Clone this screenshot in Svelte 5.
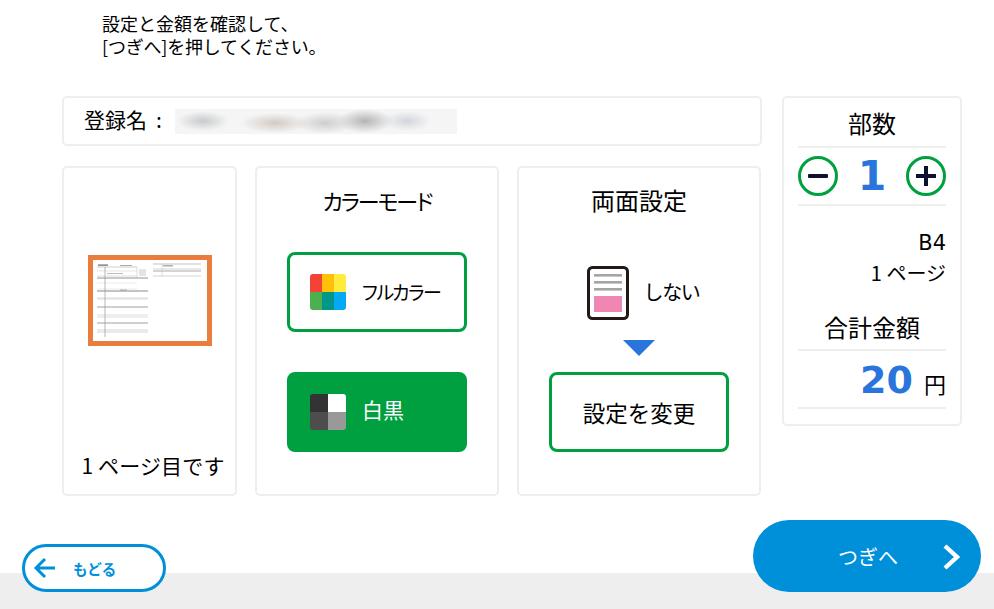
<script lang="ts">
  let copies = $state(1);
  const unitPrice = 20;
  let total = $derived(copies * unitPrice);

  const colorTiles = ['#f44336', '#ffc107', '#ffeb3b', '#4caf50', '#009688', '#03a9f4'];
  // rows of the tiny form preview: [x1, y, x2, stroke, colour]
  const formLines = [
    [4, 7, 44, 0.5, '#999'], [4, 11, 44, 0.4, '#bbb'], [4, 16, 44, 0.4, '#aaa'], [4, 18, 55, 0.8, '#777'],
    [4, 23, 44, 0.4, '#ccc'], [4, 29, 44, 0.4, '#ccc'], [4, 31, 55, 1, '#888'], [4, 38, 55, 0.5, '#bbb'],
    [4, 39, 55, 0.5, '#bbb'], [4, 47, 55, 0.8, '#888'], [4, 55, 55, 0.5, '#bbb'], [4, 57, 55, 0.5, '#bbb'],
    [4, 63, 55, 0.8, '#888'], [4, 70, 55, 0.5, '#aaa'], [4, 72, 55, 0.5, '#aaa'],
    [60, 4, 108, 0.7, '#aaa'], [60, 9, 108, 0.6, '#bbb'], [60, 11, 108, 1, '#aaa'], [60, 16, 108, 0.6, '#bbb']
  ];
</script>

<div class="page">
  <p class="intro">設定と金額を確認して、<br /><span class="tight">[つぎへ]を押してください。</span></p>

  <div class="content">
    <div class="left">
      <div class="card name-box">
        <span class="name-label">登録名<span class="colon">:</span></span>
        <div class="blurred"></div>
      </div>

      <div class="panels">
        <section class="card preview">
          <div class="thumb">
            <svg viewBox="0 0 114 81" width="114" height="81">
              {#each formLines as [x1, y, x2, w, c]}
                <line {x1} y1={y} {x2} y2={y} stroke={c} stroke-width={w} />
              {/each}
              <line x1="12" y1="7" x2="12" y2="77" stroke="#999" stroke-width="0.7" />
              <line x1="44" y1="7" x2="44" y2="18" stroke="#bbb" stroke-width="0.5" />
              <line x1="69" y1="4" x2="69" y2="16" stroke="#bbb" stroke-width="0.5" />
              <rect x="46" y="9" width="7" height="7" fill="#e4e4e4" />
              <rect x="5" y="4.5" width="10" height="1.2" fill="#666" />
              <rect x="27" y="5" width="12" height="0.8" fill="#999" />
              <rect x="70" y="5.4" width="10" height="0.9" fill="#777" />
              <rect x="14" y="13" width="16" height="0.8" fill="#aaa" />
              <rect x="27" y="29.6" width="7" height="0.8" fill="#999" />
            </svg>
          </div>
          <p class="page-no">1 ページ目です</p>
        </section>

        <section class="card mode">
          <h2 class="kana">カラーモード</h2>
          <button class="choice">
            <span class="tiles three">
              {#each colorTiles as c}<i style="background:{c}"></i>{/each}
            </span>
            <span class="choice-text small">フルカラー</span>
          </button>
          <button class="choice on">
            <span class="tiles two">
              <i style="background:#333"></i><i style="background:#fff"></i>
              <i style="background:#4d4d4d"></i><i style="background:#999"></i>
            </span>
            <span class="choice-text">白黒</span>
          </button>
        </section>

        <section class="card duplex">
          <h2>両面設定</h2>
          <div class="duplex-state">
            <svg width="42" height="54" viewBox="0 0 42 54">
              <rect x="1.5" y="1.5" width="39" height="51" rx="4" fill="#fff" stroke="#231815" stroke-width="3" />
              <rect x="7" y="8" width="28" height="2.6" fill="#a5a5a5" />
              <rect x="7" y="15" width="28" height="2.6" fill="#a5a5a5" />
              <rect x="7" y="22" width="28" height="2.6" fill="#a5a5a5" />
              <rect x="7" y="30" width="28" height="16" fill="#ef86b3" />
            </svg>
            <span>しない</span>
          </div>
          <div class="arrow-down"></div>
          <button class="change">設定を変更</button>
        </section>
      </div>
    </div>

    <aside class="card side">
      <h3 class="copies-title">部数</h3>
      <div class="stepper">
        <button class="round" aria-label="減らす" onclick={() => copies > 1 && copies--}>
          <svg width="24" height="24" viewBox="0 0 24 24"><rect x="2" y="10" width="20" height="4" rx="1" fill="#0e1230" /></svg>
        </button>
        <span class="count">{copies}</span>
        <button class="round" aria-label="増やす" onclick={() => copies++}>
          <svg width="24" height="24" viewBox="0 0 24 24"><path d="M2 10h8V2h4v8h8v4h-8v8h-4v-8H2z" fill="#0e1230" /></svg>
        </button>
      </div>
      <div class="specs">
        <div class="size">B4</div>
        <div>1 ページ</div>
      </div>
      <h3 class="total-title">合計金額</h3>
      <div class="total"><b>{total}</b><span>円</span></div>
    </aside>
  </div>

  <footer class="footer">
    <button class="back">
      <svg width="24" height="22" viewBox="0 0 24 22" fill="none" stroke="#0090da" stroke-width="3"><path d="M22 11H3M12 2l-9 9 9 9" /></svg>
      <span>もどる</span>
    </button>
    <button class="next">
      <span>つぎへ</span>
      <svg class="chev" width="18" height="26" viewBox="0 0 18 26" fill="none" stroke="#fff" stroke-width="4.4"><path d="M2 2l12 11L2 24" /></svg>
    </button>
  </footer>
</div>

<style>
  :global(body) {
    margin: 0;
    background: #fff;
    font-family: "Noto Sans CJK JP", "Liberation Sans", sans-serif;
    color: #000;
  }
  button {
    font: inherit;
    cursor: pointer;
    padding: 0;
    background: none;
    color: inherit;
  }
  h2, h3, p { margin: 0; font-weight: 400; }

  .page {
    width: 994px;
    height: 609px;
    position: relative;
    overflow: hidden;
    display: flex;
    flex-direction: column;
  }
  .intro {
    height: 96px;
    box-sizing: border-box;
    padding: 12px 0 0 102px;
    font-size: 18px;
    line-height: 23px;
  }
  .tight { letter-spacing: -0.2px; }
  .content {
    display: flex;
    gap: 20px;
    padding-left: 62px;
    align-items: flex-start;
  }
  .card {
    box-sizing: border-box;
    border: 2px solid #eee;
    border-radius: 5px;
    background: #fff;
  }
  .left { width: 700px; }

  .name-box {
    height: 50px;
    display: flex;
    align-items: center;
    padding-left: 20px;
    font-size: 21px;
    margin-bottom: 20px;
  }
  .name-label { width: 91px; flex: none; margin-bottom: 4px; }
  .colon { margin-left: 9px; }
  .blurred {
    width: 282px;
    height: 25px;
    background:
      radial-gradient(ellipse 26px 10px at 28px 12px, #c8cacc, transparent),
      radial-gradient(ellipse 34px 10px at 100px 14px, #d2cac4, transparent),
      radial-gradient(ellipse 30px 11px at 150px 14px, #cdcdcd, transparent),
      radial-gradient(ellipse 28px 12px at 190px 12px, #b4b4b6, transparent),
      radial-gradient(ellipse 24px 10px at 232px 12px, #d2d6dc, transparent),
      linear-gradient(#f5f5f5, #f5f5f5);
  }

  .panels { display: flex; gap: 18px; }
  .panels section { height: 330px; }

  .preview {
    width: 175px;
    position: relative;
    display: flex;
    flex-direction: column;
    align-items: center;
  }
  .thumb {
    margin-top: 87px;
    width: 124px;
    height: 91px;
    box-sizing: border-box;
    border: 5px solid #e87d3e;
    background: #fff;
    line-height: 0;
  }
  .page-no {
    margin-top: auto;
    margin-bottom: 14px;
    padding-left: 7px;
    font-size: 21px;
    line-height: 30px;
    letter-spacing: 0.15px;
  }

  .mode, .duplex {
    width: 244px;
    display: flex;
    flex-direction: column;
    align-items: center;
  }
  .mode h2, .duplex h2 {
    font-size: 24px;
    line-height: 30px;
    margin-top: 17px;
  }
  .mode h2.kana {
    font-size: 22px;
    font-feature-settings: "palt";
    letter-spacing: -2px;
    margin-bottom: 37px;
  }

  .choice {
    box-sizing: border-box;
    width: 180px;
    height: 80px;
    border: 3px solid #00a040;
    border-radius: 8px;
    background: #fff;
    display: flex;
    align-items: center;
    padding-left: 20px;
    margin-bottom: 40px;
  }
  .choice.on {
    background: #00a040;
    color: #fff;
  }
  .choice-text {
    margin-left: 16px;
    margin-bottom: 5px;
    font-size: 21px;
    line-height: 1;
  }
  .choice-text.small {
    font-size: 19px;
    font-feature-settings: "palt";
    letter-spacing: -1.5px;
    margin-bottom: 2px;
  }

  .tiles {
    display: grid;
    width: 36px;
    height: 36px;
    border-radius: 3px;
    overflow: hidden;
    flex: none;
  }
  .tiles.three { grid-template-columns: repeat(3, 1fr); grid-template-rows: 1fr 1fr; }
  .tiles.two { grid-template-columns: 1fr 1fr; grid-template-rows: 1fr 1fr; }

  .duplex-state {
    display: flex;
    align-items: center;
    gap: 14px;
    margin-top: 51px;
    font-size: 20px;
    letter-spacing: -1.3px;
    padding-left: 9px;
  }
  .duplex-state span { margin-bottom: 3px; }
  .duplex-state svg { display: block; }
  .arrow-down {
    width: 0;
    height: 0;
    margin-top: 20px;
    border-left: 16px solid transparent;
    border-right: 16px solid transparent;
    border-top: 16px solid #2a75dc;
  }
  .change {
    box-sizing: border-box;
    width: 180px;
    height: 80px;
    margin-top: 16px;
    border: 3px solid #00a040;
    border-radius: 8px;
    background: #fff;
    font-size: 22.5px;
  }

  .side {
    width: 180px;
    height: 330px;
    padding: 0 14px;
  }
  .copies-title {
    height: 50px;
    box-sizing: border-box;
    border-bottom: 2px solid #eee;
    text-align: center;
    font-size: 24px;
    line-height: 50px;
  }
  .stepper {
    height: 58px;
    box-sizing: border-box;
    border-bottom: 2px solid #eee;
    display: flex;
    align-items: center;
    justify-content: space-between;
  }
  .round {
    box-sizing: border-box;
    width: 40px;
    height: 40px;
    border: 3px solid #00a040;
    border-radius: 50%;
    background: #fff;
    display: flex;
    align-items: center;
    justify-content: center;
  }
  .count, .total b {
    font-family: "DejaVu Sans", sans-serif;
    font-weight: 700;
    color: #2a75dc;
  }
  .count { font-size: 41px; line-height: 1; }
  .specs {
    text-align: right;
    font-size: 20px;
    line-height: 31px;
    margin-top: 20px;
  }
  .size {
    font-family: "DejaVu Sans", sans-serif;
    font-size: 21px;
    padding-top: 2px;
    margin-bottom: -2px;
  }
  .total-title {
    height: 48px;
    box-sizing: border-box;
    margin-top: 15px;
    border-bottom: 2px solid #eee;
    text-align: center;
    font-size: 24px;
    line-height: 48px;
  }
  .total {
    height: 58px;
    box-sizing: border-box;
    padding-top: 3px;
    border-bottom: 2px solid #eee;
    display: flex;
    align-items: baseline;
    justify-content: flex-end;
    gap: 11px;
    line-height: 52px;
  }
  .total b { font-size: 38px; margin-left: -1px; }
  .total span { font-size: 22px; }

  .footer {
    position: absolute;
    left: 0;
    right: 0;
    bottom: 0;
    height: 89px;
    display: flex;
    align-items: flex-start;
    justify-content: space-between;
    box-sizing: border-box;
    padding: 0 13px 0 22px;
    background: linear-gradient(#fff 53px, #eee 53px);
  }
  .back {
    box-sizing: border-box;
    margin-top: 24px;
    width: 144px;
    height: 48px;
    border: 3px solid #0090da;
    border-radius: 24px;
    background: #fff;
    color: #0090da;
    display: flex;
    align-items: center;
    padding-left: 8px;
    gap: 16px;
    font-size: 14.5px;
    font-weight: 700;
  }
  .next {
    width: 228px;
    height: 72px;
    border: 0;
    border-radius: 36px;
    background: #0090da;
    color: #fff;
    font-size: 20px;
    display: flex;
    align-items: center;
    padding-left: 85px;
    position: relative;
  }
  .chev { position: absolute; right: 20px; top: 24px; }
</style>
